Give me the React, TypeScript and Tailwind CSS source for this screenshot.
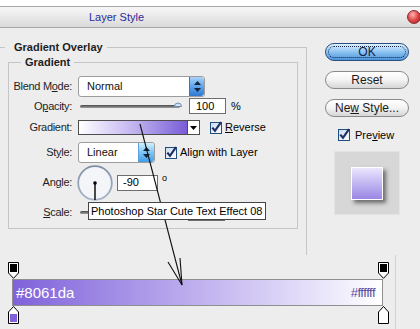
import React from "react";

function Check() {
  return (
    <svg width="12" height="12" viewBox="0 0 12 12" style={{ overflow: "visible" }}>
      <defs>
        <linearGradient id="cbg" x1="0" y1="0" x2="1" y2="1">
          <stop offset="0" stopColor="#c9daec" />
          <stop offset="1" stopColor="#ffffff" />
        </linearGradient>
      </defs>
      <rect x="0.5" y="0.5" width="11" height="11" fill="url(#cbg)" stroke="#1d4f7e" />
      <path d="M2.3 5.6 L5 8.8 L11 0.2" stroke="#1f2f66" strokeWidth="2.2" fill="none" />
    </svg>
  );
}

function Spinner({ light }: { light?: boolean }) {
  return (
    <div
      className={
        light
          ? "w-[16px] h-full rounded-r-[3px] bg-linear-to-b from-[#d2f0ff] via-[#7cc6f4] to-[#3f9de6] border-l border-[#5a9fd8] flex flex-col items-center justify-center gap-[3px]"
          : "w-[15px] h-full rounded-r-[3px] bg-linear-to-b from-[#a9d2f7] via-[#5ea5ec] to-[#2f78cf] border-l border-[#3f74b3] flex flex-col items-center justify-center gap-[3px]"
      }
    >
      <svg width="7" height="4" viewBox="0 0 7 4">
        <path d="M0 4 L3.5 0 L7 4 Z" fill="#15233a" />
      </svg>
      <svg width="7" height="4" viewBox="0 0 7 4">
        <path d="M0 0 L3.5 4 L7 0 Z" fill="#15233a" />
      </svg>
    </div>
  );
}

function Slider({ width }: { width: number }) {
  return (
    <div className="relative flex items-center h-[10px]" style={{ width }}>
      <div className="w-full h-[3px] rounded-full bg-linear-to-b from-[#4a4a4a] to-[#a0a0a0]" />
    </div>
  );
}

function Row({ label, children, h, mt }: { label: React.ReactNode; children?: React.ReactNode; h: string; mt: string }) {
  return (
    <div className={`flex items-center ${h} ${mt}`}>
      <div className="w-[63px] text-right text-[11px] tracking-[-0.3px] text-[#1e1e1e] leading-none">{label}</div>
      <div className="ml-[6px] flex items-center h-full">{children}</div>
    </div>
  );
}

function TopStop() {
  return (
    <svg width="11" height="17" viewBox="0 0 11 17">
      <path d="M0.5 0.5 H10.5 V11 L5.5 16.3 L0.5 11 Z" fill="#ffffff" stroke="#000" />
      <rect x="2" y="2" width="7" height="8" fill="#000" />
    </svg>
  );
}

function BottomStop({ color }: { color: string }) {
  return (
    <svg width="11" height="18" viewBox="0 0 11 18">
      <path d="M5.5 0.5 L10.5 6 V17.5 H0.5 V6 Z" fill="#ffffff" stroke="#000" />
      <rect x="2" y="8" width="7" height="8" fill={color} />
    </svg>
  );
}

function Capsule({ children, ok }: { children: React.ReactNode; ok?: boolean }) {
  if (ok) {
    return (
      <div className="w-[84px] h-[18px] rounded-full border border-[#2a4f7c] bg-linear-to-b from-[#e2f1ff] via-[#8cc3f1] to-[#4d93dc] p-[2px]">
        <div className="w-full h-full rounded-full border border-dotted border-[#10254a] flex items-center justify-center text-[12px] text-[#13204a] leading-none">
          <span>{children}</span>
        </div>
      </div>
    );
  }
  return (
    <div className="w-[84px] h-[18px] rounded-full border border-[#8a8a8a] bg-linear-to-b from-[#ffffff] via-[#f3f3f3] to-[#d6d6d6] flex items-center justify-center text-[12px] text-[#1a1a1a] leading-none">
      <span>{children}</span>
    </div>
  );
}

export default function App() {
  return (
    <div className="relative w-[420px] h-[329px] bg-[#ededed] overflow-hidden font-['Liberation_Sans',Arial,sans-serif]">
      <div className="h-[6px] bg-white" />
      {/* title bar */}
      <div className="h-[22px] border-t border-b border-[#a8a8a8] bg-linear-to-b from-[#f7f7f7] to-[#dadada] flex items-center">
        <span className="pl-[89px] text-[11px] text-[#2b2a9c] leading-none">Layer Style</span>
        <div className="ml-auto -mr-[1px] w-[14px] h-[14px] rounded-full border border-[#8a2a2a] bg-radial-[at_40%_30%] from-[#ffb3b3] via-[#e04848] to-[#9b1c1c]" />
      </div>

      {/* main */}
      <div className="flex h-[227px]">
        <fieldset className="-ml-[2px] mt-[13px] w-[309px] h-[214px] border-t border-r border-[#c6c6c6]">
          <legend className="ml-[7px] pl-[9px] pr-[4px] text-[11px] font-bold leading-[12px] text-[#1e1e1e]">Gradient Overlay</legend>
          <fieldset className="ml-[10px] mt-[3px] w-[290px] h-[173px] border border-[#c6c6c6]">
            <legend className="ml-[12px] px-[4px] text-[11px] font-bold leading-[12px] text-[#1e1e1e]">Gradient</legend>

            <Row label={<>Blend M<u>o</u>de:</>} h="h-[21px]" mt="mt-[8px]">
              <div className="w-[127px] h-[21px] bg-white border border-[#9c9c9c] rounded-[3px] flex items-center overflow-hidden">
                <span className="flex-1 pl-[8px] text-[11px] leading-none text-[#111]">Normal</span>
                <Spinner />
              </div>
            </Row>

            <Row label={<>O<u>p</u>acity:</>} h="h-[16px]" mt="mt-[1px]">
              <div className="w-[106px] pl-[2px] flex items-center relative">
                <Slider width={100} />
                <svg className="absolute left-[96px] top-[0px]" width="8" height="6" viewBox="0 0 8 6">
                  <path d="M0.5 5.5 A3.5 3.5 0 0 1 7.5 5.5 Z" fill="#cfe3f6" stroke="#6d8fb2" />
                </svg>
              </div>
              <div className="ml-[5px] w-[37px] h-[16px] bg-white border border-[#6e6e6e] flex items-center pl-[6px] text-[11px] leading-none">100</div>
              <span className="ml-[5px] text-[11px] leading-none">%</span>
            </Row>

            <Row label="Gradient:" h="h-[15px]" mt="mt-[6px]">
              <div className="w-[110px] h-[15px] border border-[#4d4d4d] bg-linear-to-r from-[#ffffff] via-[#c3b4ef] to-[#7a5cd6]" />
              <div className="w-[12px] h-[15px] border border-l-0 border-[#4d4d4d] bg-white flex items-center justify-center">
                <svg width="7" height="4" viewBox="0 0 7 4"><path d="M0 0 H7 L3.5 4 Z" fill="#000" /></svg>
              </div>
              <div className="ml-[10px] flex items-center">
                <Check />
                <span className="ml-[3px] text-[11px] leading-none"><u>R</u>everse</span>
              </div>
            </Row>

            <Row label={<>St<u>y</u>le:</>} h="h-[21px]" mt="mt-[7px]">
              <div className="w-[77px] h-[21px] bg-white border border-[#9c9c9c] rounded-[3px] flex items-center overflow-hidden">
                <span className="flex-1 pl-[8px] text-[11px] leading-none text-[#111]">Linear</span>
                <Spinner light />
              </div>
              <div className="ml-[10px] flex items-center">
                <Check />
                <span className="ml-[3px] text-[11px] leading-none">Align with Layer</span>
              </div>
            </Row>

            <Row label={<>An<u>g</u>le:</>} h="h-[35px]" mt="mt-[2px]">
              <svg className="-ml-[1px]" width="36" height="36" viewBox="0 0 36 36">
                <defs>
                  <linearGradient id="dial" x1="0" y1="0" x2="0" y2="1">
                    <stop offset="0" stopColor="#7f8fa6" />
                    <stop offset="1" stopColor="#a9b6c8" />
                  </linearGradient>
                </defs>
                <circle cx="18" cy="18" r="16.8" fill="#f3f5f8" stroke="url(#dial)" strokeWidth="1.8" />
                <line x1="18" y1="18" x2="18" y2="35" stroke="#000" strokeWidth="1.4" />
                <circle cx="18" cy="18" r="1.8" fill="#000" />
              </svg>
              <div className="ml-[4px] w-[41px] h-[16px] bg-white border border-[#6e6e6e] flex items-center pl-[5px] text-[11px] leading-none">-90</div>
              <span className="ml-[4px] -mt-[8px] text-[9px] leading-none">o</span>
            </Row>

            <Row label={<><u>S</u>cale:</>} h="h-[18px]" mt="mt-[3px]">
              <div className="w-[104px] pl-[2px] flex items-center">
                <Slider width={100} />
              </div>
              <div className="ml-[6px] w-[37px] h-[18px] bg-white border border-[#6e6e6e]" />
            </Row>
          </fieldset>
        </fieldset>

        {/* right column */}
        <div className="ml-[18px] pt-[15px] flex flex-col">
          <Capsule ok>OK</Capsule>
          <div className="mt-[10px]"><Capsule>Reset</Capsule></div>
          <div className="mt-[10px]"><Capsule>Ne<u>w</u> Style...</Capsule></div>
          <div className="mt-[12px] ml-[13px] flex items-center">
            <Check />
            <span className="ml-[5px] text-[11px] leading-none">Pre<u>v</u>iew</span>
          </div>
          <div className="mt-[10px] ml-[9px] w-[66px] h-[64px] bg-[#d7d7d7] border border-[#e4e4e4] flex items-center justify-center">
            <div className="w-[32px] h-[33px] border border-white bg-linear-to-b from-[#ece6fc] to-[#9a86e4] shadow-[3px_3px_4px_rgba(0,0,0,0.5)]" />
          </div>
        </div>
      </div>

      {/* gradient editor */}
      <div className="w-[396px] h-[74px] border-r border-[#d2d2d2]">
        <div className="ml-[8px] w-[381px] pt-[7px] flex justify-between">
          <TopStop />
          <TopStop />
        </div>
        <div className="ml-[12px] w-[371px] h-[27px] border border-[#8f8f8f] bg-linear-to-r from-[#8061da] via-[#bfb0ee] to-[#ffffff] flex items-center justify-between pl-[3px] pr-[7px]">
          <span className="text-[15px] text-white leading-none">#8061da</span>
          <span className="text-[13px] text-[#5b4c9e] leading-none tracking-[-0.5px]">#ffffff</span>
        </div>
        <div className="ml-[8px] w-[381px] flex justify-between">
          <BottomStop color="#8061da" />
          <BottomStop color="#ffffff" />
        </div>
      </div>

      {/* annotation arrow */}
      <svg className="absolute left-0 top-0 pointer-events-none" width="420" height="329" viewBox="0 0 420 329">
        <path d="M140 124 L182 285" stroke="#111" strokeWidth="1.1" fill="none" />
        <path d="M168 262 L182 285 L180 258" stroke="#111" strokeWidth="1.1" fill="none" />
      </svg>

      {/* tooltip */}
      <div className="absolute left-[88px] top-[202px] w-[178px] h-[18px] bg-white border border-[#454545] flex items-center pl-[2px] text-[11px] text-black leading-none whitespace-nowrap">
        Photoshop Star Cute Text Effect 08
      </div>
    </div>
  );
}
